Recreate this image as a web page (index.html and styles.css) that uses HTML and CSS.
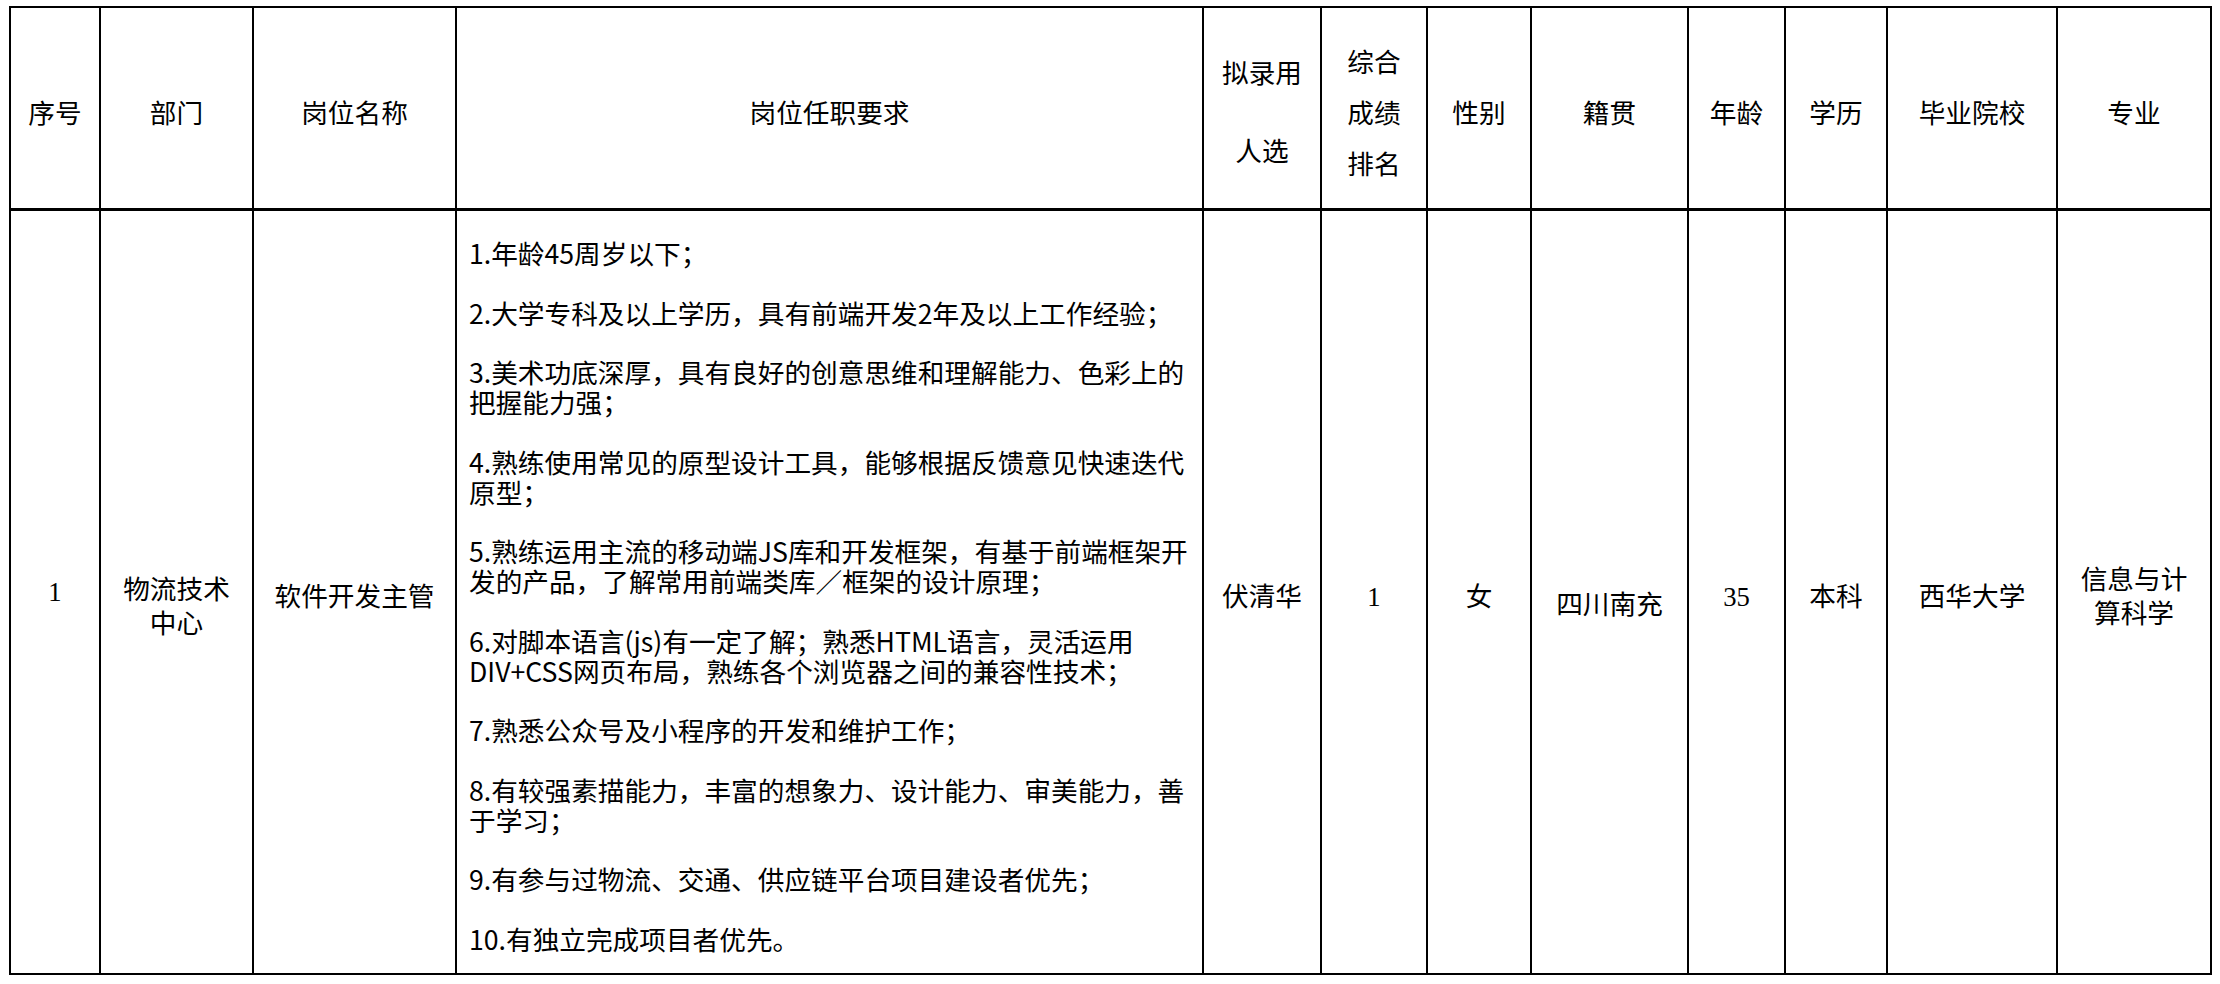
FILE: index.html
```html
<!DOCTYPE html>
<html lang="zh-CN">
<head>
<meta charset="utf-8">
<title>拟录用人选公示</title>
<link rel="stylesheet" href="styles.css">
</head>
<body>
<table class="sheet">
  <thead>
    <tr>
      <th class="c1">序号</th>
      <th class="c2">部门</th>
      <th class="c3">岗位名称</th>
      <th class="c4">岗位任职要求</th>
      <th class="c5 two">拟录用<br>人选</th>
      <th class="c6 three">综合<br>成绩<br>排名</th>
      <th class="c7">性别</th>
      <th class="c8">籍贯</th>
      <th class="c9">年龄</th>
      <th class="c10">学历</th>
      <th class="c11">毕业院校</th>
      <th class="c12">专业</th>
    </tr>
  </thead>
  <tbody>
    <tr>
      <td class="num top0">1</td>
      <td class="dept">物流技术<br>中心</td>
      <td>软件开发主管</td>
      <td class="req">
        <p>1.年龄45周岁以下；</p>
        <p>2.大学专科及以上学历，具有前端开发2年及以上工作经验；</p>
        <p>3.美术功底深厚，具有良好的创意思维和理解能力、色彩上的<br>把握能力强；</p>
        <p>4.熟练使用常见的原型设计工具，能够根据反馈意见快速迭代<br>原型；</p>
        <p>5.熟练运用主流的移动端JS库和开发框架，有基于前端框架开<br>发的产品，了解常用前端类库／框架的设计原理；</p>
        <p>6.对脚本语言(js)有一定了解；熟悉HTML语言，灵活运用<br>DIV+CSS网页布局，熟练各个浏览器之间的兼容性技术；</p>
        <p>7.熟悉公众号及小程序的开发和维护工作；</p>
        <p>8.有较强素描能力，丰富的想象力、设计能力、审美能力，善<br>于学习；</p>
        <p>9.有参与过物流、交通、供应链平台项目建设者优先；</p>
        <p>10.有独立完成项目者优先。</p>
      </td>
      <td>伏清华</td>
      <td class="num">1</td>
      <td>女</td>
      <td class="lower">四川南充</td>
      <td class="num">35</td>
      <td>本科</td>
      <td>西华大学</td>
      <td>信息与计<br>算科学</td>
    </tr>
  </tbody>
</table>
</body>
</html>
```

FILE: styles.css
```css
html, body {
  margin: 0;
  background: #ffffff;
}

body {
  padding: 6px 0 0 9px;
}

.sheet {
  border-collapse: separate;
  border-spacing: 0;
  table-layout: fixed;
  width: 2203px;
  border-top: 2px solid #000;
  border-left: 2px solid #000;
  color: #000;
}

.sheet th,
.sheet td {
  box-sizing: border-box;
  border-right: 2px solid #000;
  border-bottom: 2px solid #000;
  padding: 0;
  text-align: center;
  vertical-align: middle;
  font-size: 26.67px;
  font-weight: normal;
}

.sheet thead th {
  height: 203px;
  border-bottom-width: 3px;
  padding-top: 8px;
  font-family: "Noto Sans CJK SC", sans-serif;
  line-height: 34px;
}

.sheet thead th.two {
  line-height: 78px;
  padding-top: 6px;
}

.sheet thead th.three {
  line-height: 51px;
  padding-top: 6px;
}

.c1 { width: 90px; }
.c2 { width: 153px; }
.c3 { width: 203px; }
.c4 { width: 747px; }
.c5 { width: 118px; }
.c6 { width: 106px; }
.c7 { width: 104px; }
.c8 { width: 157px; }
.c9 { width: 97px; }
.c10 { width: 102px; }
.c11 { width: 170px; }
.c12 { width: 154px; }

.sheet tbody td {
  height: 764px;
  padding-top: 10px;
  font-family: "Liberation Serif", "Noto Sans CJK SC", serif;
  line-height: 34px;
}

.sheet tbody td.top0 {
  padding-top: 0;
}

.sheet tbody td.dept {
  padding-top: 30px;
}

.sheet tbody td.lower {
  padding-top: 26px;
}

.sheet tbody td.req {
  text-align: left;
  vertical-align: top;
  padding: 27px 0 0 12px;
  font-family: "Noto Sans CJK SC", sans-serif;
  white-space: nowrap;
}

.req p {
  margin: 0 0 29.83px;
  line-height: 29.83px;
}

.req p:last-child {
  margin-bottom: 0;
}
```
